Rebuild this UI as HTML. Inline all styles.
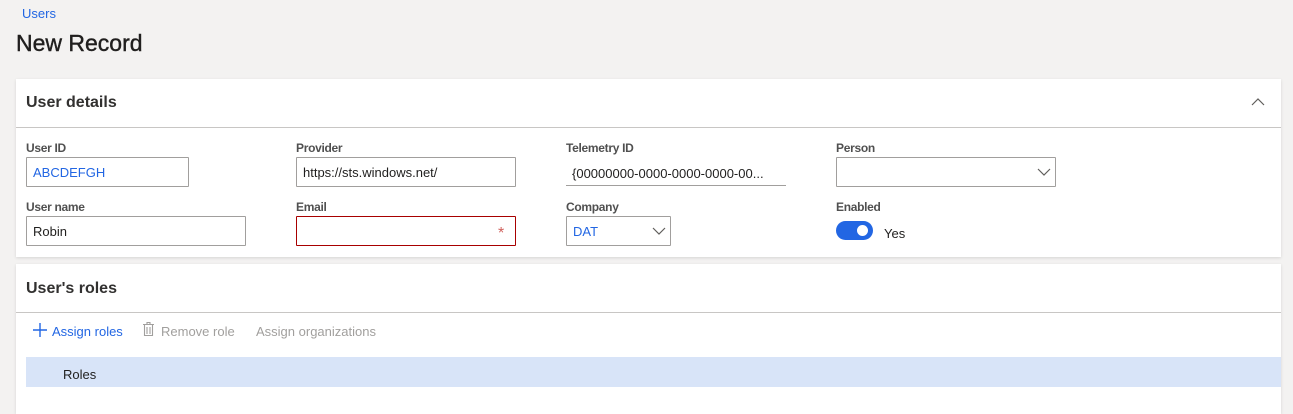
<!DOCTYPE html>
<html><head><style>
*{margin:0;padding:0;box-sizing:border-box}
body{width:1293px;height:410px;background:#f3f2f1;font-family:"Liberation Sans",sans-serif;position:relative;overflow:hidden;color:#201f1e}
.a{position:absolute;white-space:nowrap}
.lbl{font-size:12px;color:#505050;font-weight:bold;letter-spacing:-0.3px}
.inp{position:absolute;border:1px solid #a19f9d;background:#fff;height:30px;font-size:13px;padding:7px 6px;border-radius:1px}
.card{position:absolute;background:#fff;left:16px;width:1265px;box-shadow:0 1px 3px rgba(0,0,0,0.12)}
</style></head><body>
<div class="a" style="left:22px;top:6px;font-size:13px;color:#2266e3">Users</div>
<div class="a" style="left:16px;top:30px;font-size:23px;color:#201f1e;-webkit-text-stroke:0.4px #201f1e">New Record</div>

<div class="card" style="top:79px;height:178px">
  <div class="a" style="left:10px;top:15px;font-size:16px;font-weight:bold;color:#323130">User details</div>
  <svg class="a" style="left:1235px;top:18px" width="14" height="10"><path d="M1 8 L7 2 L13 8" fill="none" stroke="#605e5c" stroke-width="1.2"/></svg>
  <div class="a" style="left:0;top:48px;width:1265px;height:1px;background:#c8c6c4"></div>
</div>
<div class="a lbl" style="left:26px;top:141px">User ID</div>
<div class="inp" style="left:26px;top:157px;width:163px;color:#2266e3">ABCDEFGH</div>
<div class="a lbl" style="left:296px;top:141px">Provider</div>
<div class="inp" style="left:296px;top:157px;width:220px">https://sts.windows.net/</div>
<div class="a lbl" style="left:566px;top:141px">Telemetry ID</div>
<div class="a" style="left:572px;top:166px;font-size:13px">{00000000-0000-0000-0000-00...</div>
<div class="a" style="left:566px;top:185px;width:220px;height:1px;background:#a19f9d"></div>
<div class="a lbl" style="left:836px;top:141px">Person</div>
<div class="inp" style="left:836px;top:157px;width:220px"></div>
<svg class="a" style="left:1037px;top:168px" width="14" height="9"><path d="M1 1 L7 7 L13 1" fill="none" stroke="#605e5c" stroke-width="1.2"/></svg>

<div class="a lbl" style="left:26px;top:200px">User name</div>
<div class="inp" style="left:26px;top:216px;width:220px">Robin</div>
<div class="a lbl" style="left:296px;top:200px">Email</div>
<div class="inp" style="left:296px;top:216px;width:220px;border-color:#a80000"></div>
<div class="a" style="left:498px;top:225px;font-size:16px;color:#d0605c">*</div>
<div class="a lbl" style="left:566px;top:200px">Company</div>
<div class="inp" style="left:566px;top:216px;width:105px;color:#2266e3">DAT</div>
<svg class="a" style="left:652px;top:227px" width="14" height="9"><path d="M1 1 L7 7 L13 1" fill="none" stroke="#605e5c" stroke-width="1.2"/></svg>
<div class="a lbl" style="left:836px;top:200px">Enabled</div>
<div class="a" style="left:836px;top:221px;width:37px;height:19px;border-radius:10px;background:#2266e3"></div>
<div class="a" style="left:857px;top:225px;width:11px;height:11px;border-radius:6px;background:#fff"></div>
<div class="a" style="left:884px;top:226px;font-size:13px">Yes</div>

<div class="card" style="top:264px;height:150px">
  <div class="a" style="left:10px;top:16px;font-size:16px;font-weight:bold;color:#323130">User's roles</div>
  <div class="a" style="left:0;top:48px;width:1265px;height:1px;background:#c8c6c4"></div>
  <svg class="a" style="left:17px;top:59px" width="14" height="14"><path d="M7 0 V14 M0 7 H14" stroke="#2266e3" stroke-width="1.4"/></svg>
  <div class="a" style="left:36px;top:60px;font-size:13px;color:#2266e3">Assign roles</div>
  <svg class="a" style="left:127px;top:58px" width="11" height="14"><path d="M0 2.5 H11 M4 2.5 V0.5 H7 V2.5 M1.5 3 V13.5 H9.5 V3 M4 5 V12 M7 5 V12" fill="none" stroke="#a19f9d" stroke-width="1.1"/></svg>
  <div class="a" style="left:145px;top:60px;font-size:13px;color:#a19f9d">Remove role</div>
  <div class="a" style="left:240px;top:60px;font-size:13px;color:#a19f9d">Assign organizations</div>
  <div class="a" style="left:10px;top:93px;width:1255px;height:30px;background:#d8e4f8"></div>
  <div class="a" style="left:47px;top:103px;font-size:13px">Roles</div>
</div>
</body></html>
